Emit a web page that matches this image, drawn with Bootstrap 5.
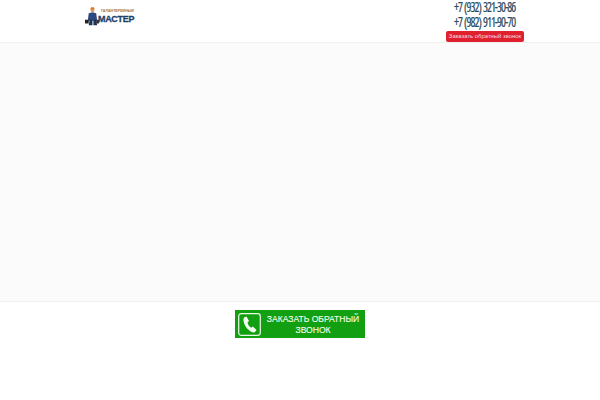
<!DOCTYPE html>
<html lang="ru"><head><meta charset="utf-8">
<link rel="stylesheet" href="https://cdn.jsdelivr.net/npm/bootstrap@5.3.0/dist/css/bootstrap.min.css">
<style>
html,body{height:400px;overflow:hidden;background:#fff}
.top-bar{height:43px;border-bottom:1px solid #f0f0f0;padding:0 76px 0 85px}
.logo-box{width:50px;height:24px;margin-top:4px;gap:0}
.logo-titles{line-height:1;padding-top:4px}
.logo-small{font:700 3.6px/7px "Liberation Sans",sans-serif;color:#a8743c;white-space:nowrap;margin-left:2px}
.logo-big{font:900 9px/9px "Liberation Sans",sans-serif;color:#1e3f66;letter-spacing:-.2px;-webkit-text-stroke:.3px #1e3f66;margin-left:-1px}
.phones{width:78px}
.phone-line{font:400 13.5px/14.5px "Open Sans",sans-serif;font-stretch:condensed;color:#2b4a5c;letter-spacing:-1.1px;word-spacing:1px;white-space:nowrap;-webkit-text-stroke:.2px #2b4a5c;transform:scaleX(.86)}
.callback{background:#e0202c;color:#f6dfe0;font:400 5.9px/11px "Liberation Sans",sans-serif;border-radius:2px;height:11px;margin-top:2px;width:78px;white-space:nowrap;text-align:center}
.hero-blank{height:259px;background:#fbfbfb;border-bottom:1px solid #f1f1f1}
.order-bar{padding-top:8px}
.order-btn{width:130px;height:28px;background:#12a012;color:#f2fff0;padding:0 0 0 3px;border-radius:0}
.phone-ico{width:23px;height:23px;flex:none}
.order-text{font:400 9.5px/11.500px "Liberation Sans",sans-serif;text-align:center;flex:none;width:104px;white-space:nowrap;-webkit-text-stroke:.12px #f2fff0;transform:scaleX(.9)}
</style></head><body>
<div class="top-bar d-flex justify-content-between align-items-start">
  <div class="logo-box d-flex">
    <svg width="14" height="24" viewBox="0 0 15 24" class="flex-shrink-0" aria-hidden="true">
      <circle cx="8" cy="6" r="2" fill="#d9a070"/><path d="M5.500 5h5l-1-2.500h-3z" fill="#d97a20"/>
      <path d="M4 9l4-1 4 1 1 8H3z" fill="#2c4a80"/><path d="M5 16h3v6H4zM9 16h3l1 6H9z" fill="#1e3358"/>
      <rect x="0" y="16" width="4" height="4" fill="#222"/><rect x="12" y="16" width="3" height="4" fill="#333"/>
    </svg>
    <div class="logo-titles"><div class="logo-small">ГАЛАНТЕРЕЙНЫЙ</div><div class="logo-big">МАСТЕР</div></div>
  </div>
  <div class="phones text-center d-flex flex-column align-items-center">
    <div class="phone-line">+7 (932) 321-30-86</div>
    <div class="phone-line">+7 (982) 911-90-70</div>
    <div class="callback">Заказать обратный звонок</div>
  </div>
</div>
<div class="hero-blank"></div>
<div class="order-bar d-flex justify-content-center">
  <div class="order-btn d-flex align-items-center">
    <svg class="phone-ico" viewBox="0 0 23 23" aria-hidden="true">
      <rect x=".7" y=".7" width="21.600" height="21.600" rx="2.500" fill="none" stroke="#eaf8e6" stroke-width="1.200"/>
      <path d="M6 4.500l2.500-1 2.500 4.500-1.500 1.500c.3 2 1.800 4.200 3.700 5.200l1.600-1.200 3.700 3.400-1.500 2c-1 .9-3 .5-5-.8-3.500-2.300-6-6.500-6.500-10-.2-1.600.2-3 .500-3.600z" fill="#f2fff0"/>
    </svg>
    <div class="order-text">ЗАКАЗАТЬ ОБРАТНЫЙ<br>ЗВОНОК</div>
  </div>
</div>
<script src="https://cdn.jsdelivr.net/npm/bootstrap@5.3.0/dist/js/bootstrap.bundle.min.js"></script>
</body></html>
